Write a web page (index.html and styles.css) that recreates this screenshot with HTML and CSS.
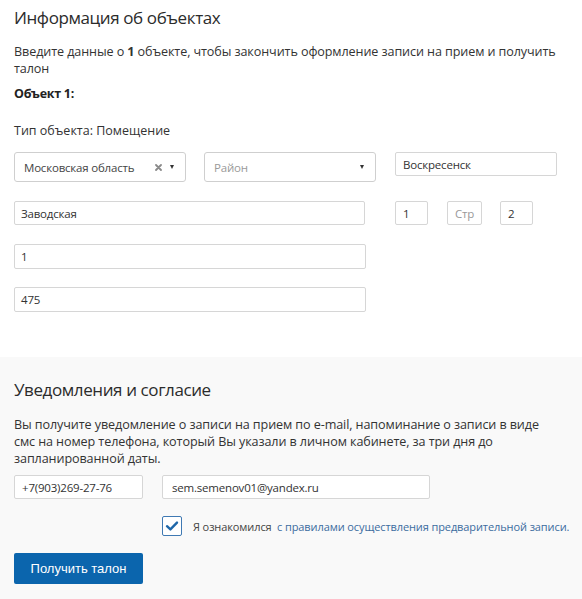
FILE: index.html
```html
<!DOCTYPE html>
<html lang="ru">
<head>
<meta charset="utf-8">
<title>Информация об объектах</title>
<link rel="stylesheet" href="styles.css">
</head>
<body>
<section class="objects">
  <h2 class="title">Информация об объектах</h2>
  <p class="lead">Введите данные о <b>1</b> объекте, чтобы закончить оформление записи на прием и получить талон</p>
  <div class="obj-label">Объект 1:</div>
  <div class="obj-type">Тип объекта: Помещение</div>

  <div class="row row-1">
    <div class="select select-region">
      <span class="select-value">Московская область</span>
      <svg class="select-clear" width="7" height="7" viewBox="0 0 7 7"><path d="M1 1L6 6M6 1L1 6" stroke="#8a8a8a" stroke-width="1.8" stroke-linecap="round"/></svg>
      <span class="select-arrow"></span>
    </div>
    <div class="select select-district">
      <span class="select-placeholder">Район</span>
      <span class="select-arrow"></span>
    </div>
    <div class="field field-city">Воскресенск</div>
  </div>

  <div class="row row-2">
    <div class="field field-street">Заводская</div>
    <div class="field field-small field-house">1</div>
    <div class="field field-small field-str placeholder">Стр</div>
    <div class="field field-small field-bld">2</div>
  </div>

  <div class="row row-3">
    <div class="field field-wide">1</div>
  </div>
  <div class="row row-4">
    <div class="field field-wide">475</div>
  </div>
</section>

<section class="consent">
  <h2 class="title">Уведомления и согласие</h2>
  <p class="lead">Вы получите уведомление о записи на прием по e-mail, напоминание о записи в виде смс на номер телефона, который Вы указали в личном кабинете, за три дня до запланированной даты.</p>
  <div class="contacts">
    <div class="field field-phone">+7(903)269-27-76</div>
    <div class="field field-email">sem.semenov01@yandex.ru</div>
  </div>
  <div class="agree">
    <span class="checkbox">
      <svg width="14" height="12" viewBox="0 0 14 12"><path d="M2 6.2L5.4 9.4L12 2.6" fill="none" stroke="#1f67a9" stroke-width="2.4" stroke-linecap="round" stroke-linejoin="round"/></svg>
    </span>
    <span class="agree-text">Я ознакомился&nbsp; <a class="agree-link" href="#">с правилами осуществления предварительной записи.</a></span>
  </div>
  <button class="btn-primary" type="button">Получить талон</button>
</section>
</body>
</html>
```

FILE: styles.css
```css
* {
  box-sizing: border-box;
}

html, body {
  margin: 0;
  padding: 0;
}

body {
  font-family: "Open Sans", "Liberation Sans", sans-serif;
  color: #333;
  background: #fff;
  width: 582px;
}

.objects {
  padding: 6px 14px 45px;
  background: #fff;
}

.title {
  margin: 0;
  font-size: 17px;
  font-weight: 400;
  line-height: 24px;
  letter-spacing: -0.4px;
  color: #2b2b2b;
}

.lead {
  margin: 13px 0 0;
  max-width: 546px;
  font-size: 12.6px;
  line-height: 17px;
  letter-spacing: -0.1px;
  color: #333;
}

.lead b {
  font-weight: 700;
}

.obj-label {
  margin-top: 8px;
  font-size: 12.5px;
  line-height: 17px;
  letter-spacing: -0.3px;
  font-weight: 700;
  color: #222;
}

.obj-type {
  margin-top: 20px;
  font-size: 12.5px;
  line-height: 17px;
  color: #333;
}

.row {
  display: flex;
  align-items: flex-start;
}

.row-1 {
  margin-top: 13px;
}

.row-2 {
  margin-top: 19px;
}

.row-3 {
  margin-top: 19px;
}

.row-4 {
  margin-top: 18px;
}

.select {
  display: flex;
  align-items: center;
  height: 30px;
  width: 172px;
  border: 1px solid #cfcfcf;
  border-radius: 3px;
  background: #fff;
  font-size: 11.5px;
  letter-spacing: -0.2px;
  padding: 0 11px 0 9px;
}

.select-region {
  margin-right: 18px;
}

.select-district {
  margin-right: 19px;
  padding-left: 9px;
}

.select-value {
  flex: 1;
  color: #444;
}

.select-placeholder {
  flex: 1;
  color: #9a9a9a;
}

.select-clear {
  margin-right: 8px;
}

.select-arrow {
  width: 0;
  height: 0;
  border-left: 2.5px solid transparent;
  border-right: 2.5px solid transparent;
  border-top: 4px solid #333;
}

.field {
  display: flex;
  align-items: center;
  height: 25px;
  border: 1px solid #d6d6d6;
  border-radius: 2px;
  background: #fff;
  font-size: 11.5px;
  letter-spacing: -0.2px;
  color: #333;
  padding: 0 6px;
  white-space: nowrap;
}

.placeholder {
  color: #999;
}

.field-city {
  width: 162px;
  height: 24px;
  padding-left: 7px;
}

.row-2 .field {
  height: 24px;
}

.field-street {
  width: 351px;
  margin-right: 30px;
}

.field-small {
  width: 33px;
  padding-left: 7px;
}

.field-house {
  margin-right: 19px;
}

.field-str {
  width: 35px;
  margin-right: 18px;
}

.field-wide {
  width: 352px;
}

.consent {
  background: #f9f9f9;
  padding: 21px 14px 15px;
}

.consent .lead {
  margin-top: 14px;
}

.contacts {
  display: flex;
  margin-top: 8px;
}

.field-phone {
  width: 129px;
  height: 24px;
  margin-right: 19px;
  padding-left: 7px;
}

.field-email {
  width: 268px;
  height: 24px;
  padding-left: 9px;
}

.agree {
  display: flex;
  align-items: center;
  margin-top: 17px;
  margin-left: 148px;
}

.checkbox {
  display: flex;
  align-items: center;
  justify-content: center;
  flex: none;
  width: 20px;
  height: 20px;
  border: 1px solid #3f79b3;
  border-radius: 2px;
  background: #fff;
  margin-right: 11px;
}

.agree-text {
  font-size: 11px;
  letter-spacing: -0.1px;
  color: #444;
  white-space: nowrap;
}

.agree-link {
  color: #3b6c9f;
  text-decoration: none;
}

.btn-primary {
  display: block;
  margin-top: 17px;
  width: 129px;
  height: 31px;
  border: 0;
  border-radius: 2px;
  background: #0b65ad;
  color: #fff;
  font-family: "Liberation Sans", Arial, sans-serif;
  font-size: 13px;
  padding: 0;
}
```
